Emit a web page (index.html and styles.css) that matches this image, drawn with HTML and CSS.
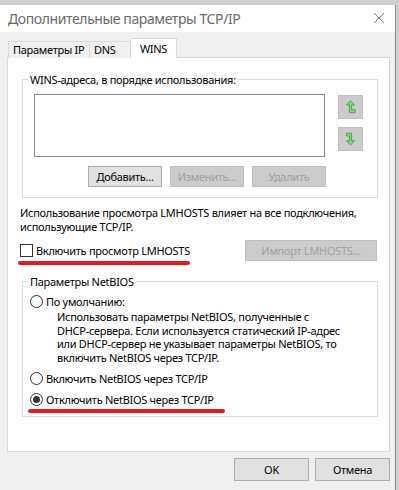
FILE: index.html
```html
<!DOCTYPE html>
<html>
<head>
  <title>Дополнительные параметры TCP/IP</title>
  <meta charset="utf-8">
  <link rel="stylesheet" href="styles.css">
</head>
<body>
  <div id="window">
    <div id="titlebar">
      <span class="title">Дополнительные параметры TCP/IP</span>
      <svg class="close" width="12" height="12" viewBox="0 0 12 12">
        <path d="M1 1 L11 11 M11 1 L1 11" stroke="#7a7a7a" stroke-width="1" fill="none"/>
      </svg>
    </div>
    <div id="content">
      <div class="tabs">
        <div class="tab tab-ip">Параметры IP</div>
        <div class="tab tab-dns">DNS</div>
        <div class="tab tab-wins active">WINS</div>
      </div>
      <div class="panel">
        <fieldset class="group group-wins">
          <legend>WINS-адреса, в порядке использования:</legend>
          <div class="wins-row">
            <div class="listbox"></div>
            <div class="arrows">
              <button class="btn arrow" disabled>
                <svg width="10" height="14" viewBox="0 0 10 14">
                  <path d="M4.5 0.8 L8.5 5 H5.6 V9.8 H9.2 V12.6 H3.4 V5 H0.5 Z" fill="#7ddc7d" stroke="#3f9e3f" stroke-width="0.9" stroke-linejoin="round"/>
                </svg>
              </button>
              <button class="btn arrow" disabled>
                <svg width="10" height="14" viewBox="0 0 10 14">
                  <path d="M0.4 1.2 H5.6 V8.8 H8.5 L4.5 13 L0.5 8.8 H3.4 V4 H0.4 Z" fill="#7ddc7d" stroke="#3f9e3f" stroke-width="0.9" stroke-linejoin="round"/>
                </svg>
              </button>
            </div>
          </div>
          <div class="wins-buttons">
            <button class="btn">Добавить...</button>
            <button class="btn" disabled>Изменить...</button>
            <button class="btn" disabled>Удалить</button>
          </div>
        </fieldset>

        <p class="note">Использование просмотра LMHOSTS влияет на все подключения,<br>использующие TCP/IP.</p>

        <div class="lm-row">
          <label class="check"><span class="box"></span>Включить просмотр LMHOSTS</label>
          <button class="btn btn-import" disabled>Импорт LMHOSTS...</button>
        </div>
        <div class="mark mark-lm"></div>

        <fieldset class="group group-netbios">
          <legend>Параметры NetBIOS</legend>
          <label class="radio radio-first"><span class="dot"></span>По умолчанию:</label>
          <p class="desc">Использовать параметры NetBIOS, полученные с<br>DHCP-сервера. Если используется статический IP-адрес<br>или DHCP-сервер не указывает параметры NetBIOS, то<br>включить NetBIOS через TCP/IP.</p>
          <label class="radio radio-on"><span class="dot"></span>Включить NetBIOS через TCP/IP</label>
          <label class="radio radio-off"><span class="dot checked"></span>Отключить NetBIOS через TCP/IP</label>
          <div class="mark mark-netbios"></div>
        </fieldset>
      </div>
      <div class="footer">
        <button class="btn btn-dialog">OK</button>
        <button class="btn btn-dialog">Отмена</button>
      </div>
    </div>
  </div>
</body>
</html>
```

FILE: styles.css
```css
html, body {
  margin: 0;
  height: 100%;
}
body {
  background-color: #cfd0d2;
  font-family: "Noto Sans", "Segoe UI", sans-serif;
  font-size: 11px;
  letter-spacing: -0.28px;
  color: #000;
  overflow: hidden;
  white-space: nowrap;
}
#window {
  margin-top: 5px;
  width: 395px;
  height: 485px;
  border-right: 1px solid #8c8c8c;
  background-color: #f0f0f0;
  display: flex;
  flex-direction: column;
}
#titlebar {
  height: 27px;
  background-color: #fff;
  display: flex;
  align-items: center;
  justify-content: space-between;
  padding: 0 10px 0 8px;
}
#titlebar .title {
  font-size: 14px;
  color: #6a6a6a;
  letter-spacing: -0.4px;
}
#titlebar .close {
  margin-top: -2px;
}
#content {
  flex-grow: 1;
}

/* Tabs */
.tabs {
  display: flex;
  align-items: flex-end;
  height: 26px;
  padding-left: 8px;
}
.tab {
  height: 16px;
  line-height: 16px;
  padding: 0 4px;
  border: 1px solid #d9d9d9;
  border-bottom: none;
  background-color: #f0f0f0;
  box-sizing: content-box;
}
.tab-ip {
  width: 72px;
}
.tab-dns {
  width: 32px;
  border-left: none;
}
.tab.active {
  width: 37px;
  height: 19px;
  line-height: 19px;
  border-left: none;
  background-color: #fff;
  position: relative;
  z-index: 1;
  text-align: center;
}

.panel {
  margin: -1px 0 0 7px;
  width: 381px;
  height: 393px;
  border: 1px solid #d9d9d9;
  background-color: #fff;
}

/* Group boxes */
.group {
  margin: 0 0 0 14px;
  padding: 0;
  width: 356px;
  box-sizing: border-box;
  border: 1px solid #dcdcdc;
}
.group legend {
  margin-left: 5px;
  padding: 0 2px;
  line-height: 15px;
}
.group-wins {
  margin-top: 14px;
  padding-bottom: 10px;
}
.wins-row {
  display: flex;
  margin-top: 7px;
  padding-left: 11px;
}
.listbox {
  width: 291px;
  height: 63px;
  box-sizing: border-box;
  border: 1px solid #828790;
  background-color: #fff;
}
.arrows {
  display: flex;
  flex-direction: column;
  gap: 8px;
  margin: 1px 0 0 13px;
}
.wins-buttons {
  display: flex;
  gap: 8px;
  margin: 9px 0 0 65px;
}

/* Buttons */
.btn {
  font-family: inherit;
  font-size: 11px;
  letter-spacing: -0.28px;
  color: #000;
  background-color: #e1e1e1;
  border: 1px solid #adadad;
  padding: 0;
  margin: 0;
  width: 74px;
  height: 21px;
  line-height: 19px;
  box-sizing: border-box;
}
.btn:disabled {
  color: #a0a0a0;
  background-color: #cccccc;
  border-color: #bfbfbf;
}
.btn.arrow {
  width: 25px;
  height: 24px;
  display: flex;
  align-items: center;
  justify-content: center;
}
.btn-import {
  width: 132px;
}
.btn-dialog {
  width: 75px;
  height: 23px;
}

.note {
  margin: 8px 0 0 12px;
  line-height: 14px;
}

.lm-row {
  display: flex;
  align-items: center;
  justify-content: space-between;
  margin: 6px 12px 0 12px;
}
.check, .radio {
  display: flex;
  align-items: center;
  height: 15px;
}
.box {
  width: 13px;
  height: 13px;
  box-sizing: border-box;
  border: 1px solid #333;
  background-color: #fff;
  margin-right: 3px;
}

/* Red annotation underlines */
.mark {
  height: 4px;
  border-radius: 2px;
  background-color: #e8191c;
}
.mark-lm {
  width: 172px;
  margin: 0 0 0 10px;
}
.mark-netbios {
  width: 197px;
  margin: 2px 0 0 5px;
}

.group-netbios {
  margin-top: 9px;
  padding-bottom: 3px;
}
.radio {
  margin-left: 7px;
}
.radio-first {
  margin-top: 5px;
}
.radio-on {
  margin-top: 7px;
}
.radio-off {
  margin-top: 6px;
}
.dot {
  width: 13px;
  height: 13px;
  box-sizing: border-box;
  border: 1px solid #333;
  border-radius: 50%;
  background-color: #fff;
  margin-right: 3px;
  display: flex;
  align-items: center;
  justify-content: center;
}
.dot.checked::after {
  content: "";
  width: 7px;
  height: 7px;
  border-radius: 50%;
  background-color: #333;
}
.desc {
  margin: 1px 0 0 34px;
  line-height: 13.5px;
}

.footer {
  display: flex;
  justify-content: flex-end;
  gap: 6px;
  margin: 6px 5px 0 0;
}
```
